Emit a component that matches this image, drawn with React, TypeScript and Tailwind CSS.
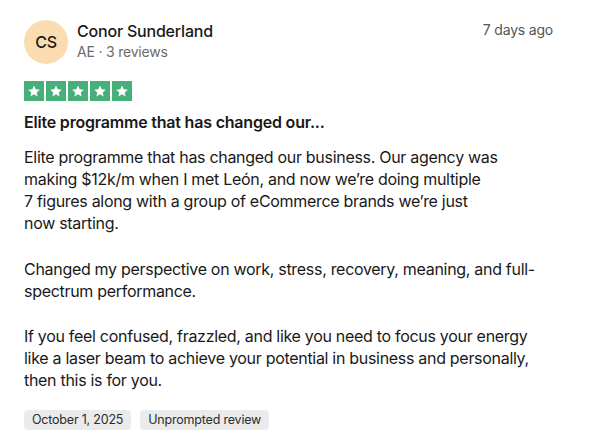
import React from "react";

function Star() {
  return (
    <div className="w-5 h-5 bg-[#47b07a] flex items-center justify-center">
      <svg viewBox="0 0 24 24" className="w-[14px] h-[14px]" fill="#fff">
        <path d="M12 2.5l2.9 6.6 7.1.6-5.4 4.7 1.6 7-6.2-3.7-6.2 3.7 1.6-7L2 9.7l7.1-.6z" />
      </svg>
    </div>
  );
}

export default function App() {
  return (
    <div className="w-[593px] h-[443px] bg-white text-[#191919] font-['Inter',sans-serif] tracking-[-0.2px] pl-6 pr-10 pt-5">
      {/* Header */}
      <div className="flex items-start justify-between">
        <div className="flex items-center gap-[9px]">
          <div className="w-11 h-11 rounded-full bg-[#fbdcb1] flex items-center justify-center text-[16px] font-medium tracking-tight">
            CS
          </div>
          <div className="flex flex-col -mt-[3px]">
            <span className="text-[16px] leading-[22px] font-medium">Conor Sunderland</span>
            <span className="text-[14px] leading-[20px] text-[#6b6b6b]">AE · 3 reviews</span>
          </div>
        </div>
        <span className="text-[14px] leading-[20px] text-[#545454]">7 days ago</span>
      </div>

      {/* Stars */}
      <div className="flex gap-[2px] mt-[17px]">
        <Star />
        <Star />
        <Star />
        <Star />
        <Star />
      </div>

      <h2 className="mt-[10px] text-[16px] leading-[22px] font-semibold">Elite programme that has changed our...</h2>

      <div className="mt-[13px] text-[16px] leading-[22px] tracking-[-0.3px] whitespace-nowrap">
        <p>
          Elite programme that has changed our business. Our agency was
          <br />
          making $12k/m when I met León, and now we’re doing multiple
          <br />
          7 figures along with a group of eCommerce brands we’re just
          <br />
          now starting.
        </p>
        <p className="mt-[24px]">
          Changed my perspective on work, stress, recovery, meaning, and full-
          <br />
          spectrum performance.
        </p>
        <p className="mt-[23px]">
          If you feel confused, frazzled, and like you need to focus your energy
          <br />
          like a laser beam to achieve your potential in business and personally,
          <br />
          then this is for you.
        </p>
      </div>

      <div className="flex gap-[9px] mt-[19px]">
        <span className="bg-[#ebebeb] rounded-[4px] px-2 py-[2px] text-[12.5px] leading-[16px] text-[#2c2c2c]">October 1, 2025</span>
        <span className="bg-[#ebebeb] rounded-[4px] px-2 py-[2px] text-[12.5px] leading-[16px] text-[#2c2c2c]">Unprompted review</span>
      </div>
    </div>
  );
}
